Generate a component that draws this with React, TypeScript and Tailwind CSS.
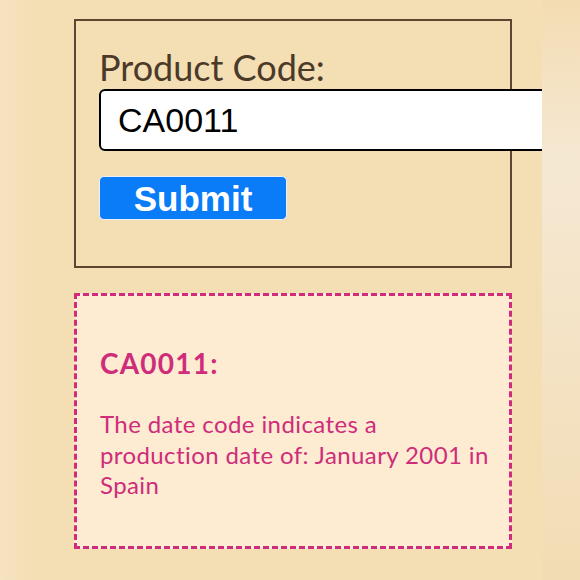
import React from 'react';

// Product code lookup card
export default function App() {
  const code = 'CA0011';

  return (
    <div className="flex h-[580px] w-[580px] overflow-hidden bg-[#f4deb4]">
      {/* Main column */}
      <div className="relative h-full w-[542px] shrink-0 overflow-hidden bg-gradient-to-r from-[#f6e3bf] from-0% via-[#f4deb4] via-[7%] to-[#f4deb4] pl-[74px] pt-[19px]">
        {/* Form box */}
        <div className="h-[249px] w-[438px] border-2 border-[#5b4731] pl-[23px] pt-[28px]">
          <label className="block font-['Lato',sans-serif] text-[36px] leading-none text-[#4b3a28]">
            Product Code:
          </label>
          <input
            type="text"
            defaultValue={code}
            className="mt-[4px] block h-[62px] w-[470px] rounded-md border-2 border-black bg-white pl-[17px] font-['Liberation_Sans',Arial,sans-serif] text-[34px] text-black outline-none"
          />
          <button className="mt-[25px] block h-[44px] w-[188px] rounded-[5px] border border-[#e8f0ff] bg-[#0a7cf8] font-['Liberation_Sans',Arial,sans-serif] text-[35px] font-bold leading-none text-white">
            Submit
          </button>
        </div>

        {/* Result box */}
        <div className="mt-[25px] h-[256px] w-[438px] border-[3px] border-dashed border-[#d02c7b] bg-[#fdebd2] pl-[23px] pr-[12px] pt-[53px] text-[#cf2c7b]">
          <h2 className="font-['Lato',sans-serif] text-[28px] font-bold leading-none tracking-[1.2px]">{code}:</h2>
          <p className="mt-[32px] font-['Lato',sans-serif] text-[24px] leading-[30.5px] tracking-[0.4px]">
            The date code indicates a production date of: January 2001 in Spain
          </p>
        </div>
      </div>

      {/* Right edge strip */}
      <div className="h-full flex-1 bg-gradient-to-b from-[#f3dcb2] via-[#f5e8d3] via-[28%] to-[#f2dcb3]" />
    </div>
  );
}
